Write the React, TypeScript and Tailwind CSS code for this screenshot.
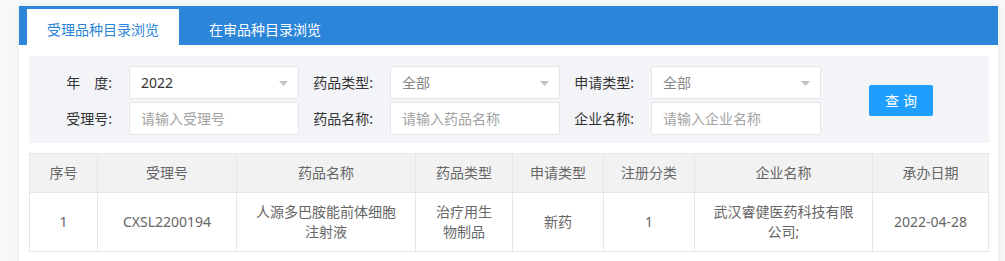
import React from "react";

const columns = [
  { title: "序号", width: 68 },
  { title: "受理号", width: 139 },
  { title: "药品名称", width: 179 },
  { title: "药品类型", width: 97 },
  { title: "申请类型", width: 91 },
  { title: "注册分类", width: 91 },
  { title: "企业名称", width: 178 },
  { title: "承办日期", width: 116 },
];

const rows = [
  ["1", "CXSL2200194", "人源多巴胺能前体细胞注射液", "治疗用生物制品", "新药", "1", "武汉睿健医药科技有限公司;", "2022-04-28"],
];

function Arrow() {
  return (
    <svg width="9" height="5" viewBox="0 0 9 5" className="absolute right-[10px] top-[14px]">
      <path d="M0 0 H9 L4.5 5 Z" fill="#c2c2c2" />
    </svg>
  );
}

function Field({ label, value, placeholder, select }: { label: string; value?: string; placeholder?: string; select?: boolean }) {
  return (
    <div className="flex items-center">
      <label className="w-[91px] pr-[17px] text-right text-[14px] text-[#333]">{label}</label>
      <div className="relative w-[170px] h-[33px] bg-white border border-[#e6e6e6] rounded-[2px] flex items-center pl-[11px] text-[14px]">
        {value ? (
          <span className={value === "2022" ? "text-[#333]" : "text-[#888]"}>{value}</span>
        ) : (
          <span className="text-[#a3a3a3]">{placeholder}</span>
        )}
        {select && <Arrow />}
      </div>
    </div>
  );
}

export default function App() {
  return (
    <div
      className="min-h-screen bg-[#f7f8fa] pt-[6px] pl-[19px] pr-[7px]"
      style={{ fontFamily: '"Noto Sans", "Noto Sans CJK SC", sans-serif' }}
    >
      <div className="bg-white shadow-[0_0_6px_rgba(0,0,0,0.08)] min-h-[260px]">
        <div className="h-[39px] bg-[#2b85d8] flex items-end pl-[8px]">
          <div className="h-[36px] w-[152px] bg-white text-[#2b85d8] text-[14px] flex items-center justify-center pt-[4px]">
            受理品种目录浏览
          </div>
          <div className="h-[36px] pl-[30px] text-white text-[14px] flex items-center pt-[4px]">在审品种目录浏览</div>
        </div>

        <div className="pl-[10px] pr-[9px] pt-[11px]">
          <div className="bg-[#f3f4f8] h-[87px] pl-[9px] flex items-center">
            <div className="flex flex-col gap-[3px] mt-[1px]">
              <div className="flex">
                <Field label="年　度:" value="2022" select />
                <Field label="药品类型:" value="全部" select />
                <Field label="申请类型:" value="全部" select />
              </div>
              <div className="flex">
                <Field label="受理号:" placeholder="请输入受理号" />
                <Field label="药品名称:" placeholder="请输入药品名称" />
                <Field label="企业名称:" placeholder="请输入企业名称" />
              </div>
            </div>
            <button className="ml-[48px] mt-[2px] w-[64px] h-[31px] bg-[#1e9fff] text-white text-[14px] rounded-[2px] tracking-[4px] pl-[4px]">
              查询
            </button>
          </div>

          <table className="mt-[10px] w-[959px] table-fixed border-collapse text-[14px] text-[#666]">
            <colgroup>
              {columns.map((c) => (
                <col key={c.title} style={{ width: c.width }} />
              ))}
            </colgroup>
            <thead>
              <tr className="bg-[#f2f2f2]">
                {columns.map((c) => (
                  <th key={c.title} className="h-[39px] border border-[#e6e6e6] font-normal text-center leading-[20px]">
                    {c.title}
                  </th>
                ))}
              </tr>
            </thead>
            <tbody>
              {rows.map((r) => (
                <tr key={r[1]} className="bg-white">
                  {r.map((cell, i) => (
                    <td key={i} className="h-[59px] border border-[#e6e6e6] text-center leading-[20px] px-[15px]">
                      {cell}
                    </td>
                  ))}
                </tr>
              ))}
            </tbody>
          </table>
        </div>
      </div>
    </div>
  );
}
